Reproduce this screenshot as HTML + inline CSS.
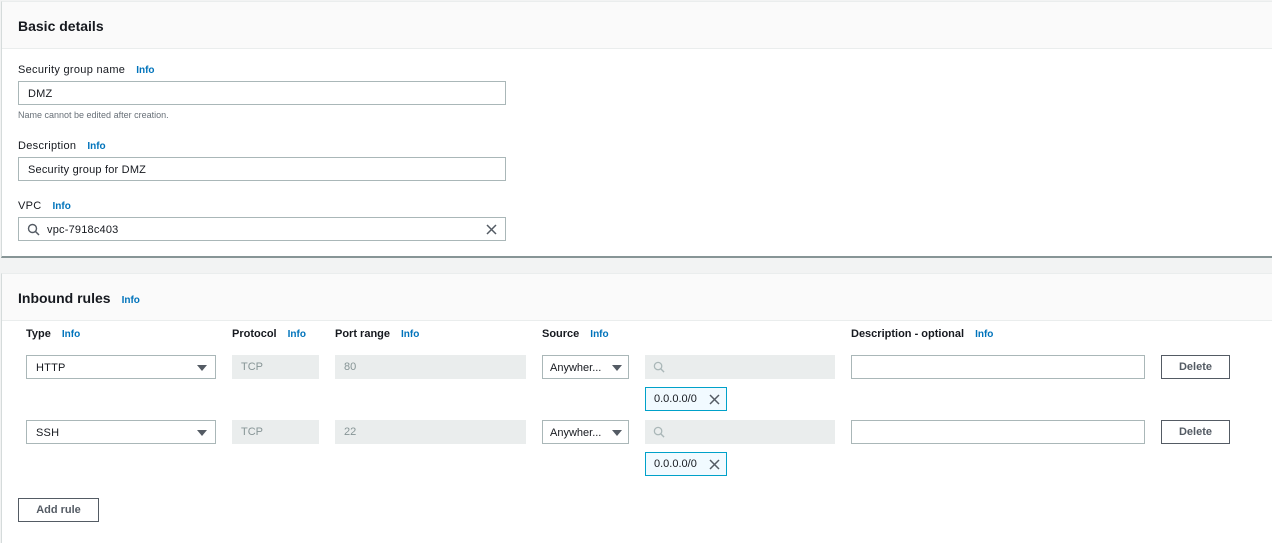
<!DOCTYPE html>
<html><head><style>
*{box-sizing:border-box;margin:0;padding:0}
body{width:1272px;height:538px;background:#f2f3f3;font-family:"Liberation Sans",sans-serif;color:#16191f;position:relative;overflow:hidden;font-size:12px}
.a{position:absolute}
.panel{position:absolute;left:1px;right:0;background:#fff;border-left:1px solid #d5dbdb;border-top:1px solid #eaeded}
.hdr{position:absolute;left:0;right:0;top:0;background:#fafafa;border-bottom:1px solid #eaeded}
.h{font-weight:bold;font-size:14px}
.info{color:#0073bb;font-weight:bold;font-size:10px;margin-left:11px;letter-spacing:0}
.inp{position:absolute;height:24px;border:1px solid #aab7b8;background:#fff;font-size:11px;line-height:24px;padding-left:9px;letter-spacing:0.2px}
.dis{position:absolute;height:24px;background:#eaeded;color:#879596;font-size:11px;line-height:25px;padding-left:9px}
.lbl{position:absolute;font-size:11px;letter-spacing:0.3px}
.bl{position:absolute;font-size:11px;font-weight:bold}
.btn{position:absolute;height:24px;border:1px solid #545b64;background:#fff;font-weight:bold;color:#545b64;font-size:11px;line-height:23px;text-align:center}
.chip{position:absolute;height:24px;border:1px solid #00a1c9;background:#f1faff;font-size:11px;line-height:23px;padding-left:8px;width:82px}
.caret{position:absolute;right:8px;top:9px;width:0;height:0;border-left:5px solid transparent;border-right:5px solid transparent;border-top:6px solid #545b64}
</style></head><body>
<div class="panel" style="top:1px;height:257px;border-bottom:2px solid #879596">
 <div class="hdr" style="height:47px"><div class="a h" style="left:16px;top:16px">Basic details</div></div>
</div>
<div class="lbl" style="left:18px;top:64px">Security group name<span class="info">Info</span></div>
<div class="inp" style="left:18px;top:81px;width:488px">DMZ</div>
<div class="a" style="left:18px;top:110px;font-size:9px;color:#687078">Name cannot be edited after creation.</div>
<div class="lbl" style="left:18px;top:140px">Description<span class="info">Info</span></div>
<div class="inp" style="left:18px;top:157px;width:488px">Security group for DMZ</div>
<div class="lbl" style="left:18px;top:200px">VPC<span class="info">Info</span></div>
<div class="inp" style="left:18px;top:217px;width:488px;padding-left:28px">vpc-7918c403
 <svg class="a" style="left:8px;top:5px" width="13" height="13" viewBox="0 0 13 13"><circle cx="5.5" cy="5.5" r="4" fill="none" stroke="#545b64" stroke-width="1.4"/><path d="M8.5 8.5L12 12" stroke="#545b64" stroke-width="1.5"/></svg>
 <svg class="a" style="right:8px;top:6px" width="11" height="11" viewBox="0 0 11 11"><path d="M1 1L10 10M10 1L1 10" stroke="#545b64" stroke-width="1.5"/></svg>
</div>

<div class="panel" style="top:273px;height:270px">
 <div class="hdr" style="height:47px"><div class="a h" style="left:16px;top:16px">Inbound rules<span class="info">Info</span></div></div>
</div>
<div class="bl" style="left:26px;top:328px">Type<span class="info">Info</span></div>
<div class="bl" style="left:232px;top:328px">Protocol<span class="info">Info</span></div>
<div class="bl" style="left:335px;top:328px">Port range<span class="info">Info</span></div>
<div class="bl" style="left:542px;top:328px">Source<span class="info">Info</span></div>
<div class="bl" style="left:851px;top:328px">Description - optional<span class="info">Info</span></div>

<div class="inp" style="left:26px;top:355px;width:190px">HTTP<div class="caret"></div></div>
<div class="dis" style="left:232px;top:355px;width:87px">TCP</div>
<div class="dis" style="left:335px;top:355px;width:191px">80</div>
<div class="inp" style="left:542px;top:355px;width:87px;padding-left:7px;letter-spacing:0">Anywher...<div class="caret" style="right:6px"></div></div>
<div class="dis" style="left:645px;top:355px;width:190px"><svg class="a" style="left:8px;top:6px" width="12" height="12" viewBox="0 0 13 13"><circle cx="5.5" cy="5.5" r="4" fill="none" stroke="#aab7b8" stroke-width="1.4"/><path d="M8.5 8.5L12 12" stroke="#aab7b8" stroke-width="1.5"/></svg></div>
<div class="inp" style="left:851px;top:355px;width:294px"></div>
<div class="btn" style="left:1161px;top:355px;width:69px">Delete</div>
<div class="chip" style="left:645px;top:387px">0.0.0.0/0<svg class="a" style="right:6px;top:6px" width="11" height="11" viewBox="0 0 11 11"><path d="M1 1L10 10M10 1L1 10" stroke="#545b64" stroke-width="1.5"/></svg></div>

<div class="inp" style="left:26px;top:420px;width:190px">SSH<div class="caret"></div></div>
<div class="dis" style="left:232px;top:420px;width:87px">TCP</div>
<div class="dis" style="left:335px;top:420px;width:191px">22</div>
<div class="inp" style="left:542px;top:420px;width:87px;padding-left:7px;letter-spacing:0">Anywher...<div class="caret" style="right:6px"></div></div>
<div class="dis" style="left:645px;top:420px;width:190px"><svg class="a" style="left:8px;top:6px" width="12" height="12" viewBox="0 0 13 13"><circle cx="5.5" cy="5.5" r="4" fill="none" stroke="#aab7b8" stroke-width="1.4"/><path d="M8.5 8.5L12 12" stroke="#aab7b8" stroke-width="1.5"/></svg></div>
<div class="inp" style="left:851px;top:420px;width:294px"></div>
<div class="btn" style="left:1161px;top:420px;width:69px">Delete</div>
<div class="chip" style="left:645px;top:452px">0.0.0.0/0<svg class="a" style="right:6px;top:6px" width="11" height="11" viewBox="0 0 11 11"><path d="M1 1L10 10M10 1L1 10" stroke="#545b64" stroke-width="1.5"/></svg></div>

<div class="btn" style="left:18px;top:498px;width:81px">Add rule</div>
</body></html>
